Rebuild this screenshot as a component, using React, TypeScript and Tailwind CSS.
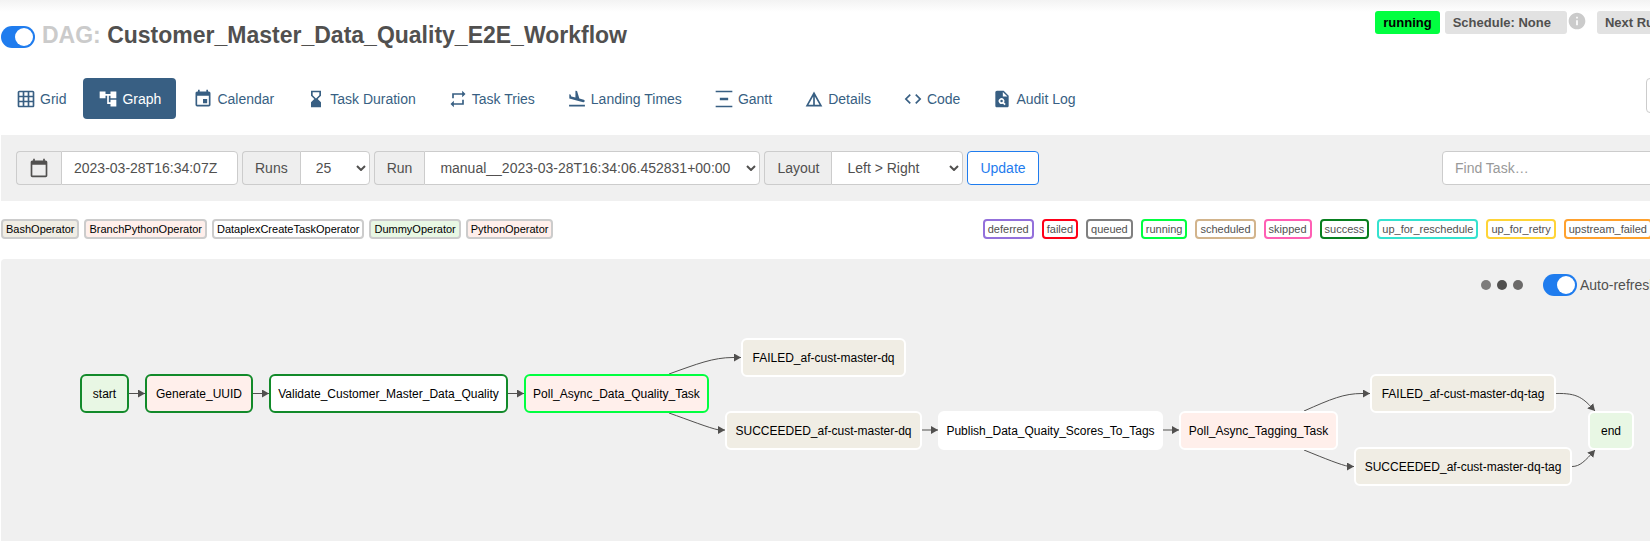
import type { ReactNode } from 'react';
import type { IconType } from 'react-icons';
import {
  MdAccountTree,
  MdCalendarToday,
  MdCode,
  MdDetails,
  MdEvent,
  MdFlightLand,
  MdGridOn,
  MdHourglassBottom,
  MdInfo,
  MdPlagiarism,
  MdRepeat,
  MdVerticalDistribute,
} from 'react-icons/md';

const tabs: { label: string; icon: IconType; active?: boolean }[] = [
  { label: 'Grid', icon: MdGridOn },
  { label: 'Graph', icon: MdAccountTree, active: true },
  { label: 'Calendar', icon: MdEvent },
  { label: 'Task Duration', icon: MdHourglassBottom },
  { label: 'Task Tries', icon: MdRepeat },
  { label: 'Landing Times', icon: MdFlightLand },
  { label: 'Gantt', icon: MdVerticalDistribute },
  { label: 'Details', icon: MdDetails },
  { label: 'Code', icon: MdCode },
  { label: 'Audit Log', icon: MdPlagiarism },
];

const operators = [
  { label: 'BashOperator', fill: 'bg-[#f0ede4]' },
  { label: 'BranchPythonOperator', fill: 'bg-[#ffefeb]' },
  { label: 'DataplexCreateTaskOperator', fill: 'bg-white' },
  { label: 'DummyOperator', fill: 'bg-[#e8f7e4]' },
  { label: 'PythonOperator', fill: 'bg-[#ffefeb]' },
];

const states = [
  { label: 'deferred', border: 'border-[#9370db]' },
  { label: 'failed', border: 'border-[#ff0018]' },
  { label: 'queued', border: 'border-[#808080]' },
  { label: 'running', border: 'border-[#01ff40]' },
  { label: 'scheduled', border: 'border-[#d2b48c]' },
  { label: 'skipped', border: 'border-[#ff5fb4]' },
  { label: 'success', border: 'border-[#087f1f]' },
  { label: 'up_for_reschedule', border: 'border-[#35e2cf]' },
  { label: 'up_for_retry', border: 'border-[#ffd437]' },
  { label: 'upstream_failed', border: 'border-[#ffa12e]' },
];

const bash = 'bg-[#f0ede4]';
const python = 'bg-[#ffefeb]';
const dummy = 'bg-[#e8f7e4]';
const success = 'border-[#128a2a]';
const running = 'border-[#01ff40]';
const idle = 'border-white';

const nodes = [
  { label: 'start', left: 79, top: 115, width: 49, fill: dummy, border: success },
  { label: 'Generate_UUID', left: 144, top: 115, width: 108, fill: python, border: success },
  { label: 'Validate_Customer_Master_Data_Quality', left: 268, top: 115, width: 239, fill: 'bg-white', border: success },
  { label: 'Poll_Async_Data_Quality_Task', left: 523, top: 115, width: 185, fill: python, border: running },
  { label: 'FAILED_af-cust-master-dq', left: 740, top: 79, width: 165, fill: bash, border: idle },
  { label: 'SUCCEEDED_af-cust-master-dq', left: 724, top: 152, width: 197, fill: bash, border: idle },
  { label: 'Publish_Data_Quaity_Scores_To_Tags', left: 937, top: 152, width: 225, fill: 'bg-white', border: idle },
  { label: 'Poll_Async_Tagging_Task', left: 1178, top: 152, width: 159, fill: python, border: idle },
  { label: 'FAILED_af-cust-master-dq-tag', left: 1369, top: 115, width: 186, fill: bash, border: idle },
  { label: 'SUCCEEDED_af-cust-master-dq-tag', left: 1353, top: 188, width: 218, fill: bash, border: idle },
  { label: 'end', left: 1587, top: 152, width: 46, fill: dummy, border: idle },
];

const edges = [
  'M128 134.5H144',
  'M252 134.5H268',
  'M507 134.5H523',
  'M668 115C696 105 712 98.5 732 98.5H740',
  'M668 154C688 161 708 169 718 171H724',
  'M921 171H937',
  'M1162 171H1178',
  'M1303 152C1330 140 1343 134.5 1361 134.5H1369',
  'M1303 191C1325 200 1340 206 1348 207.5H1353',
  'M1555 134.5C1577 134 1582 139 1594 152',
  'M1571 207.5C1579 207.5 1584 202 1594 191',
];

function Toggle({ label }: { label: string }) {
  return (
    <label className="inline-flex cursor-pointer">
      <input type="checkbox" defaultChecked aria-label={label} className="peer sr-only" />
      <span className="flex h-[22px] w-[34px] items-center justify-start rounded-full bg-gray-400 p-[2px] peer-checked:justify-end peer-checked:bg-[#1f7cee]">
        <span className="size-[18px] rounded-full bg-white" />
      </span>
    </label>
  );
}

function Addon({ htmlFor, children }: { htmlFor: string; children: ReactNode }) {
  return (
    <label
      htmlFor={htmlFor}
      className="flex items-center rounded-l border border-r-0 border-[#ccc] bg-[#eee] px-3"
    >
      {children}
    </label>
  );
}

function SelectGroup({ id, label, value, width }: { id: string; label: string; value: string; width: string }) {
  return (
    <div className="flex h-[34px] shrink-0">
      <Addon htmlFor={id}>{label}</Addon>
      <div className={`grid items-center ${width}`}>
        <select
          id={id}
          className="col-start-1 row-start-1 h-[34px] w-full appearance-none rounded-r border border-[#ccc] bg-white pr-6 pl-[15px]"
        >
          <option>{value}</option>
        </select>
        <svg
          viewBox="0 0 10 6"
          className="pointer-events-none col-start-1 row-start-1 mr-1 h-[6px] w-[10px] justify-self-end fill-none stroke-[#51504f] stroke-2"
        >
          <path d="M1 1l4 4 4-4" />
        </svg>
      </div>
    </div>
  );
}

function Header() {
  return (
    <header className="flex items-start justify-between bg-linear-to-b from-[#f3f3f3] to-white to-[12px] pl-px">
      <h1 className="flex items-center gap-[7px] pt-5 text-[23px] leading-[30px] font-bold">
        <Toggle label="Pause or unpause DAG" />
        <span className="pb-[3px]">
          <span className="text-[#cbcbcb]">DAG:</span> Customer_Master_Data_Quality_E2E_Workflow
        </span>
      </h1>
      <div className="-mr-5 flex shrink-0 pt-[11px] text-[13px] leading-[23px] font-bold">
        <a href="#running" className="mr-[5px] rounded-[3px] bg-[#01ff40] px-2 text-black">
          running
        </a>
        <span className="rounded-[3px] bg-[#e2e2e2] pr-4 pl-2">Schedule: None</span>
        <MdInfo className="mr-[10px] size-5 text-[#cbcbcb]" />
        <span className="rounded-l-[3px] bg-[#e2e2e2] px-2">Next Run</span>
      </div>
    </header>
  );
}

function Nav() {
  return (
    <nav className="flex justify-between pt-[25px] pl-px">
      <ul className="flex gap-[2px]">
        {tabs.map(({ label, icon: Icon, active }) => (
          <li key={label}>
            <a
              href={`#${label}`}
              className={`flex h-[41px] items-center gap-1 rounded px-[15px] whitespace-nowrap ${
                active ? 'bg-[#385f83] text-white' : 'text-[#385f83]'
              }`}
            >
              <Icon className="size-5" />
              {label}
            </a>
          </li>
        ))}
      </ul>
      <button type="button" aria-label="Trigger DAG" className="-mr-8 h-[35px] w-9 rounded border border-[#ccc]" />
    </nav>
  );
}

function Filters() {
  return (
    <form className="mt-4 ml-px flex gap-1 bg-[#f0f0f0] py-4 pl-[15px]">
      <div className="flex h-[34px]">
        <Addon htmlFor="base-date">
          <MdCalendarToday className="size-5" />
        </Addon>
        <input
          id="base-date"
          aria-label="Base date"
          defaultValue="2023-03-28T16:34:07Z"
          className="w-[177px] rounded-r border border-[#ccc] bg-white px-3"
        />
      </div>
      <SelectGroup id="runs" label="Runs" value="25" width="w-[70px]" />
      <SelectGroup id="run" label="Run" value="manual__2023-03-28T16:34:06.452831+00:00" width="w-[336px]" />
      <SelectGroup id="layout" label="Layout" value="Left > Right" width="w-[132px]" />
      <button type="button" className="h-[34px] rounded border border-[#1f7cee] bg-white px-3 text-[#1f7cee]">
        Update
      </button>
      <input
        type="text"
        aria-label="Find Task"
        placeholder="Find Task…"
        className="-mr-4 ml-auto h-[34px] w-56 rounded border border-[#ccc] bg-white px-3 placeholder:text-[#999]"
      />
    </form>
  );
}

function Legend() {
  return (
    <div className="flex justify-between pt-[18px] pb-5 pl-px text-[11px] leading-4 whitespace-nowrap">
      <ul className="flex gap-[5px] text-black">
        {operators.map(({ label, fill }) => (
          <li key={label} className={`rounded border-2 border-[#ccc] px-[3px] ${fill}`}>
            {label}
          </li>
        ))}
      </ul>
      <ul className="-mr-[2px] flex gap-2">
        {states.map(({ label, border }) => (
          <li key={label} className={`rounded border-2 bg-white px-[3px] ${border}`}>
            {label}
          </li>
        ))}
      </ul>
    </div>
  );
}

function Graph() {
  return (
    <main className="relative ml-px min-h-[282px] flex-1 overflow-hidden rounded-tl bg-[#f0f0f0]">
      <div className="-mr-4 flex items-center justify-end pt-[15px]">
        <div className="mr-5 flex gap-[6px]">
          <span className="size-[10px] rounded-full bg-[#7d7c7b]" />
          <span className="size-[10px] rounded-full bg-[#51504f]" />
          <span className="size-[10px] rounded-full bg-[#6b6a69]" />
        </div>
        <Toggle label="Auto-refresh" />
        <span className="ml-[3px] w-[86px]">Auto-refresh</span>
      </div>
      <svg className="absolute top-0 left-0 h-[282px] w-[1649px] fill-none stroke-[#51504f]" viewBox="0 0 1649 282">
        <defs>
          <marker id="arrow" viewBox="0 0 7 8" refX="7" refY="4" markerWidth="7" markerHeight="8" markerUnits="userSpaceOnUse" orient="auto">
            <path d="M0 0L7 4L0 8Z" className="fill-[#51504f] stroke-none" />
          </marker>
        </defs>
        {edges.map((d) => (
          <path key={d} d={d} markerEnd="url(#arrow)" />
        ))}
      </svg>
      {nodes.map(({ label, left, top, width, fill, border }) => (
        <button
          key={label}
          type="button"
          className={`absolute flex h-[39px] items-center justify-center rounded-md border-2 text-[12px] whitespace-nowrap text-black ${fill} ${border}`}
          style={{ left, top, width }}
        >
          {label}
        </button>
      ))}
    </main>
  );
}

export default function App() {
  return (
    <div className="flex min-h-screen flex-col overflow-hidden bg-white font-['Liberation_Sans',Arial,sans-serif] text-[14px] leading-5 text-[#51504f]">
      <Header />
      <Nav />
      <Filters />
      <Legend />
      <Graph />
    </div>
  );
}
